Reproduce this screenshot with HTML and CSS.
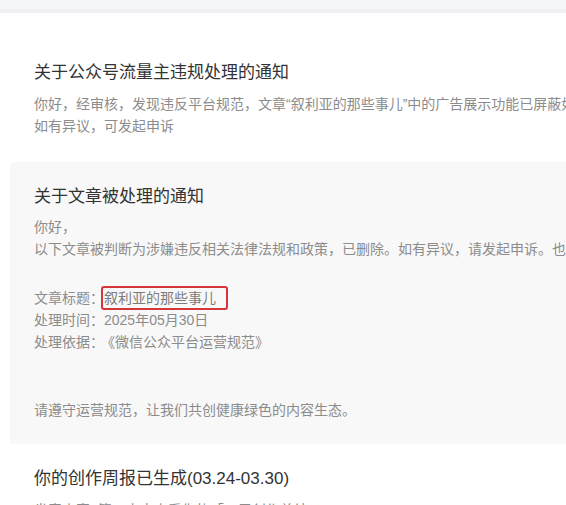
FILE: index.html
```html
<!DOCTYPE html>
<html lang="zh-CN">
<head>
<meta charset="utf-8">
<link rel="stylesheet" href="styles.css">
</head>
<body>
<div class="topbar"></div>
<main class="list">
  <section class="item">
    <h2 class="title">关于公众号流量主违规处理的通知</h2>
    <p class="text">你好，经审核，发现违反平台规范，文章“叙利亚的那些事儿”中的广告展示功能已屏蔽如有疑问</p>
    <p class="text">如有异议，可发起申诉</p>
  </section>
  <section class="item card">
    <h2 class="title">关于文章被处理的通知</h2>
    <div class="para">
      <p class="text">你好，</p>
      <p class="text">以下文章被判断为涉嫌违反相关法律法规和政策，已删除。如有异议，请发起申诉。也可以查看</p>
    </div>
    <div class="meta">
      <p class="text">文章标题：<span class="mark">叙利亚的那些事儿</span></p>
      <p class="text">处理时间：2025年05月30日</p>
      <p class="text">处理依据：<span class="basis">《微信公众平台运营规范》</span></p>
    </div>
    <p class="text closing">请遵守运营规范，让我们共创健康绿色的内容生态。</p>
  </section>
  <section class="item last">
    <h2 class="title">你的创作周报已生成(03.24-03.30)</h2>
    <p class="text sub">发表内容1篇，点击查看你的「一周创作总结」</p>
  </section>
</main>
</body>
</html>
```
FILE: styles.css
```css
html, body {
  margin: 0;
  padding: 0;
  background: #ffffff;
  overflow: hidden;
}
body {
  font-family: "Liberation Sans", "Noto Sans CJK SC", sans-serif;
  width: 566px;
  height: 505px;
}
.topbar {
  height: 9px;
  background: #f6f7f9;
  border-bottom: 4px solid #f0f1f4;
}
.list {
  display: flex;
  flex-direction: column;
  padding-top: 48px;
}
.item {
  padding-left: 34px;
  white-space: nowrap;
}
.title {
  margin: 0;
  font-size: 17px;
  font-weight: normal;
  line-height: 24px;
  color: #333333;
}
.text {
  margin: 0;
  font-size: 14px;
  line-height: 22px;
  color: #8c8c8c;
}
.item > .title + .text {
  margin-top: 8px;
}
.card {
  margin-top: 25px;
  margin-left: 10px;
  padding: 23px 0 23px 24px;
  background: #f8f8f8;
  border-radius: 4px 0 0 4px;
}
.para {
  margin-top: 7px;
}
.para .text + .text {
  line-height: 23px;
}
.meta {
  margin-top: 25px;
}
.meta .text {
  line-height: 21.5px;
}
.mark {
  display: inline-block;
  margin-left: -3px;
  padding: 0 10px 0 1px;
  line-height: 20px;
  border: 2px solid #d4363a;
  border-radius: 3px;
  color: #7c7c7c;
}
.basis {
  margin-left: 4px;
}
.closing {
  margin-top: 46px;
}
.last {
  margin-top: 23px;
}
.last .sub {
  margin-top: 2px;
}
```
